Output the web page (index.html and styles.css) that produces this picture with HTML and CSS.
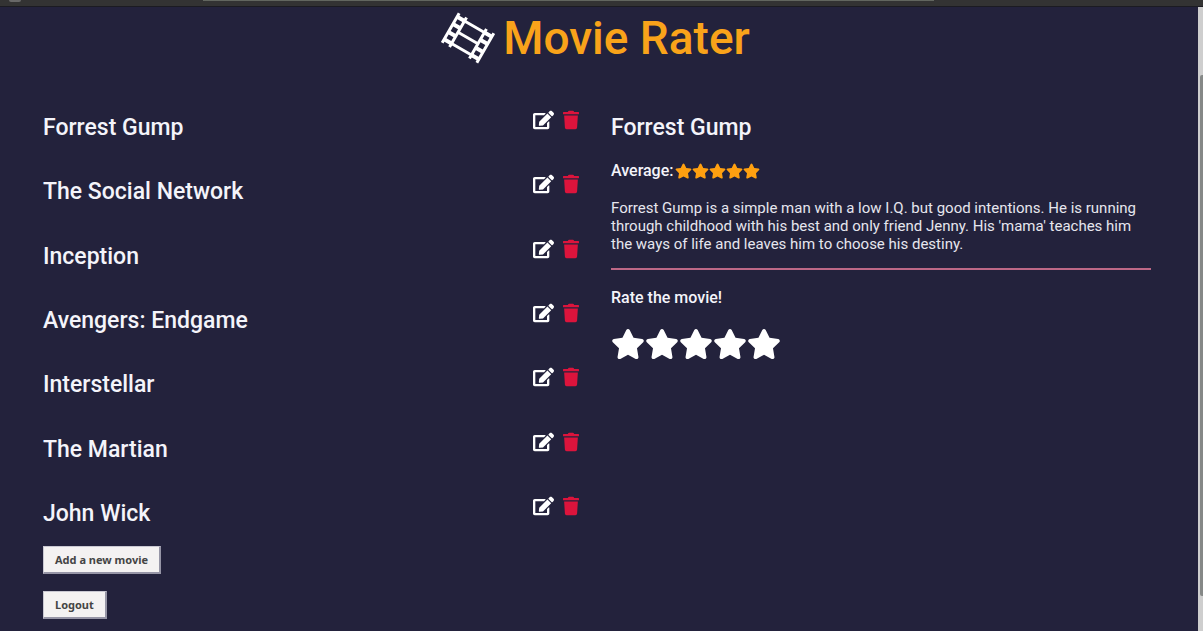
FILE: index.html
```html
<!DOCTYPE html>
<html lang="en">
<head>
<meta charset="utf-8">
<title>Movie Rater</title>
<link rel="stylesheet" href="styles.css">
</head>
<body>
<svg class="sprite" aria-hidden="true">
  <symbol id="edit" viewBox="0 0 576 512"><path d="M402.6 83.2l90.2 90.2c3.800 3.800 3.800 10 0 13.800L274.400 405.600l-92.800 10.300c-12.400 1.400-22.900-9.100-21.500-21.500l10.300-92.800L388.800 83.200c3.800-3.800 10-3.800 13.800 0zm162-22.900l-48.800-48.800c-15.200-15.200-39.900-15.200-55.200 0l-35.400 35.400c-3.800 3.800-3.800 10 0 13.800l90.200 90.200c3.800 3.800 10 3.800 13.800 0l35.400-35.400c15.200-15.300 15.200-40 0-55.200zM384 346.200V448H64V128h229.800c3.200 0 6.200-1.300 8.500-3.500l40-40c7.600-7.600 2.200-20.500-8.500-20.500H48C21.500 64 0 85.500 0 112v352c0 26.500 21.500 48 48 48h352c26.500 0 48-21.500 48-48V306.200c0-10.700-12.900-16-20.500-8.500l-40 40c-2.200 2.300-3.500 5.300-3.500 8.500z"/></symbol>
  <symbol id="trash" viewBox="0 0 448 512"><path d="M432 32H312l-9.400-18.700A24 24 0 0 0 281.100 0H166.800a23.700 23.700 0 0 0-21.400 13.300L136 32H16A16 16 0 0 0 0 48v32a16 16 0 0 0 16 16h416a16 16 0 0 0 16-16V48a16 16 0 0 0-16-16zM53.200 467a48 48 0 0 0 47.900 45h245.800a48 48 0 0 0 47.900-45L416 128H32z"/></symbol>
  <symbol id="star" viewBox="0 0 576 512"><path d="M259.300 17.800L194 150.200 47.900 171.500c-26.200 3.800-36.700 36.100-17.700 54.600l105.700 103-25 145.500c-4.500 26.300 23.200 46 46.400 33.700L288 439.600l130.700 68.700c23.200 12.200 50.900-7.400 46.400-33.700l-25-145.500 105.700-103c19-18.500 8.500-50.800-17.700-54.600L382 150.200 316.700 17.800c-11.700-23.600-45.600-23.900-57.400 0z"/></symbol>
</svg>

<div class="browser-edge"><span class="edge-tool"></span><span class="edge-address"></span></div>
<div class="viewport">
  <div class="app">
    <header class="header">
      <svg class="logo" viewBox="0 0 56 54" aria-hidden="true">
        <g transform="translate(28 27) rotate(30)">
          <path d="M-20 -17V17M-11.500 -17V17M11.500 -17V17M20 -17V17M-11 -13H11M-11 0H11M-11 13H11"/>
          <path class="sprockets" d="M-20 -13H-11M-20 -4.500H-11M-20 4.500H-11M-20 13H-11M11 -13H20M11 -4.500H20M11 4.500H20M11 13H20"/>
        </g>
      </svg>
      <h1 class="title">Movie Rater</h1>
    </header>
    <main class="layout">
      <section class="movies">
        <ul class="movie-list">
          <li class="movie"><h2 class="name">Forrest Gump</h2><button class="icon-button" aria-label="Edit Forrest Gump"><svg class="edit"><use href="#edit"/></svg></button><button class="icon-button" aria-label="Delete Forrest Gump"><svg class="trash"><use href="#trash"/></svg></button></li>
          <li class="movie"><h2 class="name">The Social Network</h2><button class="icon-button" aria-label="Edit The Social Network"><svg class="edit"><use href="#edit"/></svg></button><button class="icon-button" aria-label="Delete The Social Network"><svg class="trash"><use href="#trash"/></svg></button></li>
          <li class="movie"><h2 class="name">Inception</h2><button class="icon-button" aria-label="Edit Inception"><svg class="edit"><use href="#edit"/></svg></button><button class="icon-button" aria-label="Delete Inception"><svg class="trash"><use href="#trash"/></svg></button></li>
          <li class="movie"><h2 class="name">Avengers: Endgame</h2><button class="icon-button" aria-label="Edit Avengers: Endgame"><svg class="edit"><use href="#edit"/></svg></button><button class="icon-button" aria-label="Delete Avengers: Endgame"><svg class="trash"><use href="#trash"/></svg></button></li>
          <li class="movie"><h2 class="name">Interstellar</h2><button class="icon-button" aria-label="Edit Interstellar"><svg class="edit"><use href="#edit"/></svg></button><button class="icon-button" aria-label="Delete Interstellar"><svg class="trash"><use href="#trash"/></svg></button></li>
          <li class="movie"><h2 class="name">The Martian</h2><button class="icon-button" aria-label="Edit The Martian"><svg class="edit"><use href="#edit"/></svg></button><button class="icon-button" aria-label="Delete The Martian"><svg class="trash"><use href="#trash"/></svg></button></li>
          <li class="movie"><h2 class="name">John Wick</h2><button class="icon-button" aria-label="Edit John Wick"><svg class="edit"><use href="#edit"/></svg></button><button class="icon-button" aria-label="Delete John Wick"><svg class="trash"><use href="#trash"/></svg></button></li>
        </ul>
        <div class="actions">
          <button class="action">Add a new movie</button>
          <button class="action">Logout</button>
        </div>
      </section>
      <section class="details">
        <h2 class="name">Forrest Gump</h2>
        <div class="average">Average:
          <span class="score" role="img" aria-label="5 out of 5 stars"><svg><use href="#star"/></svg><svg><use href="#star"/></svg><svg><use href="#star"/></svg><svg><use href="#star"/></svg><svg><use href="#star"/></svg></span>
        </div>
        <p class="description">Forrest Gump is a simple man with a low I.Q. but good intentions. He is running through childhood with his best and only friend Jenny. His 'mama' teaches him the ways of life and leaves him to choose his destiny.</p>
        <h3 class="rate-title">Rate the movie!</h3>
        <div class="rate">
          <button class="icon-button" aria-label="Rate 1 star"><svg><use href="#star"/></svg></button>
          <button class="icon-button" aria-label="Rate 2 stars"><svg><use href="#star"/></svg></button>
          <button class="icon-button" aria-label="Rate 3 stars"><svg><use href="#star"/></svg></button>
          <button class="icon-button" aria-label="Rate 4 stars"><svg><use href="#star"/></svg></button>
          <button class="icon-button" aria-label="Rate 5 stars"><svg><use href="#star"/></svg></button>
        </div>
      </section>
    </main>
  </div>
  <div class="scrollbar"><div class="thumb"></div></div>
</div>
</body>
</html>
```
FILE: styles.css
```css
* { box-sizing: border-box; }

body {
  margin: 0;
  min-height: 100vh;
  display: flex;
  flex-direction: column;
  background: #23223c;
  color: #f4f4fa;
  font-family: Roboto, sans-serif;
}

h1, h2, h3, p, ul { margin: 0; padding: 0; }
.sprite { display: none; }
svg { display: block; fill: currentColor; }

.browser-edge {
  display: flex;
  align-items: flex-start;
  height: 7px;
  background: #333333;
  border-bottom: 1px solid #1b1b22;
}
.edge-tool {
  width: 12px;
  height: 2px;
  margin-left: 9px;
  border-radius: 0 0 6px 6px;
  background: #686868;
}
.edge-address {
  flex: 0 1 731px;
  height: 1px;
  margin-left: 182px;
  background: #62665f;
}

.viewport { flex: 1; display: flex; }
.app { flex: 1; min-width: 0; }

.scrollbar {
  width: 5px;
  padding: 68px 0 35px 2px;
  display: flex;
  background: #cecece;
}
.thumb { flex: 1; background: #858887; border-radius: 2px 0 0 2px; }

.header {
  display: flex;
  justify-content: center;
  align-items: flex-start;
  gap: 7px;
  padding: 3px 8px 0 0;
}
.logo { width: 56px; height: 56px; }
.logo path { fill: none; stroke: #ffffff; stroke-width: 3; }
.logo .sprockets { stroke-width: 4; }
.title {
  color: #f9a31a;
  font-size: 46px;
  font-weight: 500;
  line-height: 56px;
}

.layout {
  display: grid;
  grid-template-columns: 1fr 1fr;
  gap: 28px;
  padding: 35px 47px 0 43px;
}
.movie-list {
  display: flex;
  flex-direction: column;
  justify-content: space-between;
  min-height: 445px;
  list-style: none;
}
.movie {
  display: flex;
  align-items: flex-start;
  gap: 9px;
  height: 59px;
  padding: 9px 4px 0 0;
}
.name {
  flex: 1;
  padding-top: 2px;
  font-size: 23px;
  font-weight: 500;
  line-height: 32px;
}
.icon-button {
  padding: 0;
  border: 0;
  background: none;
  color: #ffffff;
  cursor: pointer;
}
.edit { width: 21px; height: 20px; }
.trash { width: 16px; height: 20px; color: #dc143c; }

.actions {
  display: flex;
  flex-direction: column;
  align-items: flex-start;
  gap: 17px;
}
.action {
  height: 28px;
  padding: 0 11px;
  border: 1px solid #c9c8d2;
  border-right: 2px solid #9695a6;
  border-bottom: 2px solid #9695a6;
  background: #f4f2f2;
  color: #454545;
  font: bold 11px "Noto Sans", sans-serif;
}

.details { padding-top: 9px; }
.average {
  display: flex;
  align-items: center;
  gap: 2px;
  margin-top: 17px;
  font-size: 16px;
  font-weight: 500;
  line-height: 20px;
}
.score { display: flex; color: #ffa010; }
.score svg { width: 17px; height: 16px; }
.description {
  margin-top: 18px;
  padding-bottom: 15px;
  border-bottom: 2px solid #bd6886;
  color: #e6e6ee;
  font-size: 15px;
  line-height: 18px;
}
.rate-title {
  margin-top: 18px;
  font-size: 16px;
  font-weight: 500;
  line-height: 20px;
}
.rate { display: flex; margin-top: 20px; }
.rate svg { width: 34px; height: 32px; }
```
